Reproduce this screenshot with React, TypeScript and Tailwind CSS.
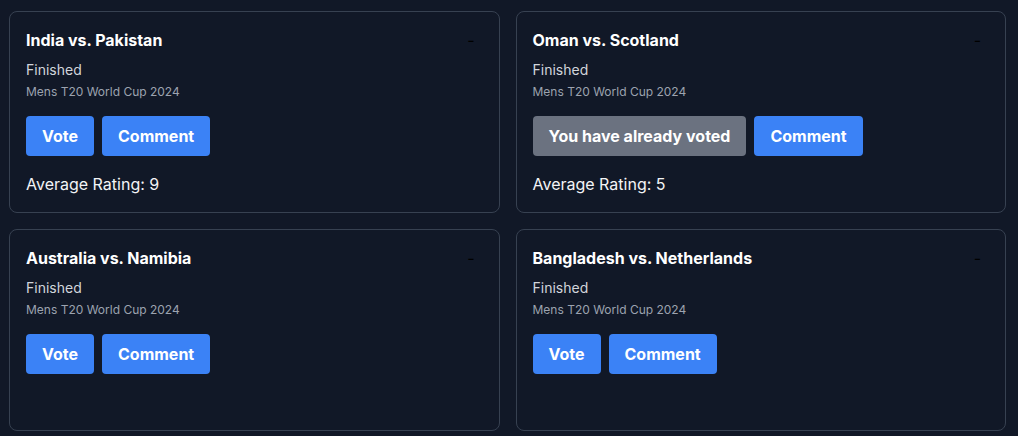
import React from "react";

type Match = {
  title: string;
  voted?: boolean;
  rating?: number;
};

const matches: Match[] = [
  { title: "India vs. Pakistan", rating: 9 },
  { title: "Oman vs. Scotland", voted: true, rating: 5 },
  { title: "Australia vs. Namibia" },
  { title: "Bangladesh vs. Netherlands" },
];

function Card({ m }: { m: Match }) {
  return (
    <div className="rounded-lg border border-[#374151] p-4">
      <div className="flex items-center justify-between">
        <h2 className="text-base font-bold leading-6 text-white">{m.title}</h2>
        <span className="mr-[8px] text-base leading-6 text-black">-</span>
      </div>
      <p className="mt-2 text-sm leading-5 text-[#d1d5db]">Finished</p>
      <p className="mt-1 text-xs leading-4 text-[#9ca3af]">Mens T20 World Cup 2024</p>
      <div className="mt-4 flex gap-2">
        {m.voted ? (
          <button className="rounded bg-[#6b7280] px-4 py-2 text-base font-bold leading-6 text-white">
            You have already voted
          </button>
        ) : (
          <button className="rounded bg-[#3b82f6] px-4 py-2 text-base font-bold leading-6 text-white">
            Vote
          </button>
        )}
        <button className="rounded bg-[#3b82f6] px-4 py-2 text-base font-bold leading-6 text-white">
          Comment
        </button>
      </div>
      {m.rating !== undefined && (
        <p className="mt-4 text-base leading-6 text-[#f3f4f6]">Average Rating: {m.rating}</p>
      )}
    </div>
  );
}

export default function App() {
  return (
    <div
      className="min-h-[436px] bg-[#111827] pl-[9px] pr-[12px] pt-[11px]"
      style={{ fontFamily: "Inter, 'Noto Sans', sans-serif" }}
    >
      <div className="grid auto-rows-fr grid-cols-2 gap-4">
        {matches.map((m) => (
          <Card key={m.title} m={m} />
        ))}
      </div>
    </div>
  );
}
